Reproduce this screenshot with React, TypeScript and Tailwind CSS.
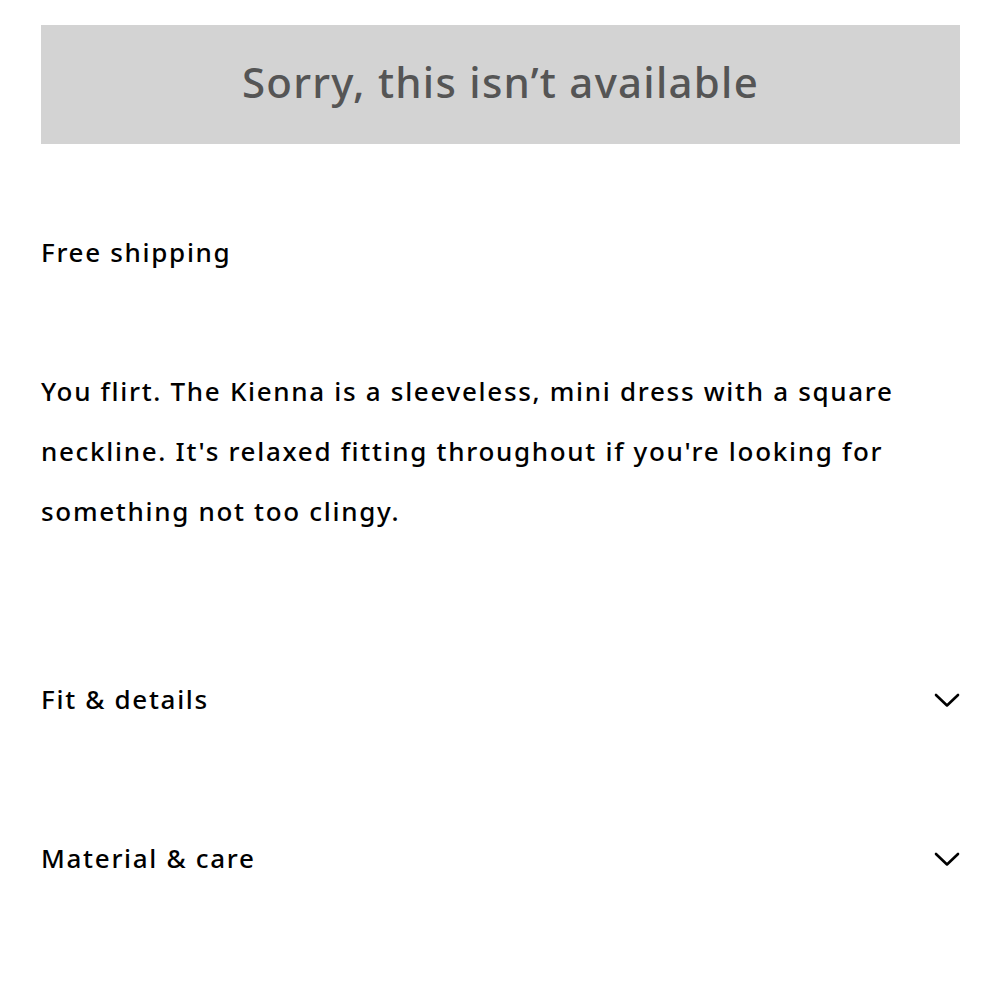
const sections = ['Fit & details', 'Material & care'];

function Chevron() {
  return (
    <svg width="26" height="15" viewBox="0 0 26 15" fill="none" stroke="currentColor" strokeWidth="2.6">
      <polyline points="2,2 13,12.5 24,2" strokeLinecap="round" strokeLinejoin="round" />
    </svg>
  );
}

export default function App() {
  return (
    <div className="min-h-screen bg-white px-[41px] pt-[25px] text-black [font-family:'Noto_Sans',Lato,sans-serif]">
      {/* Sold out banner */}
      <div className="flex h-[119px] w-[919px] items-center justify-center bg-[#d3d3d3] pb-[7px]">
        <span className="text-[42px] font-medium tracking-[0.03em] text-[#555555]">Sorry, this isn’t available</span>
      </div>

      <p className="mt-[90px] text-[26px] font-medium leading-[36px] tracking-[0.065em]">Free shipping</p>

      <p className="mt-[91px] text-[26px] font-medium leading-[60px] tracking-[0.065em]">
        You flirt. The Kienna is a sleeveless, mini dress with a square neckline. It's relaxed fitting throughout if
        you're looking for something not too clingy.
      </p>

      <div className="mt-[79px] flex flex-col">
        {sections.map((label) => (
          <div key={label} className="flex h-[159px] items-center justify-between">
            <span className="text-[26px] font-medium tracking-[0.065em]">{label}</span>
            <span className="-mr-[1px] pt-[2px]">
              <Chevron />
            </span>
          </div>
        ))}
      </div>
    </div>
  );
}
